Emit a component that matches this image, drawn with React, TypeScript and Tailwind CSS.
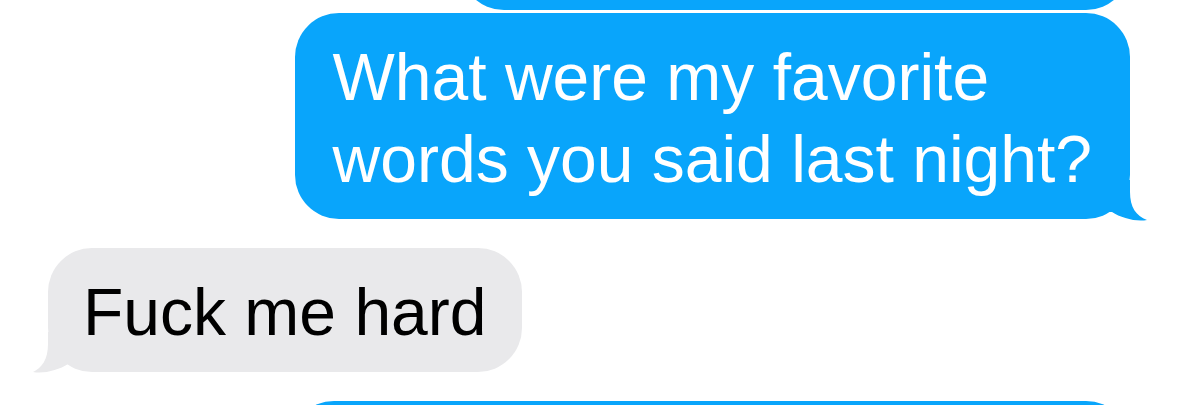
import React from 'react';

const BLUE = '#09a5fb';
const GRAY = '#e9e9eb';

// Outgoing tail hangs off the bottom-right corner of the bubble
const TailRight: React.FC = () => (
  <svg
    width="48"
    height="41"
    viewBox="0 0 48 41"
    className="absolute right-[-18px] bottom-[-2px]"
  >
    <path
      d="M30 0 L30 12 C30 27 36 36 47 40 C36 42 21 38 12 32 L0 32 L0 0 Z"
      fill={BLUE}
    />
  </svg>
);

// Incoming tail, mirrored for the left side
const TailLeft: React.FC = () => (
  <svg
    width="48"
    height="41"
    viewBox="0 0 48 41"
    className="absolute left-[-16px] bottom-[-1px]"
  >
    <path
      d="M16 0 L16 12 C16 27 10 36 1 40 C12 42 27 38 36 32 L48 32 L48 0 Z"
      fill={GRAY}
    />
  </svg>
);

export default function App() {
  return (
    <div className="h-[405px] w-[1179px] overflow-hidden bg-white font-['Liberation_Sans',Arial,sans-serif]">
      <div className="flex flex-col pl-[48px] pr-[49px]">
        {/* previous outgoing message, scrolled mostly out of view */}
        <div className="self-end -mt-[80px] h-[90px] w-[670px] rounded-[44px] bg-[#09a5fb]" />

        <div className="relative self-end mt-[3px] rounded-[44px] bg-[#09a5fb] px-[38px] pt-[23px] pb-[19px] text-[66px] leading-[82px] text-white whitespace-nowrap">
          What were my favorite
          <br />
          words you said last night?
          <TailRight />
        </div>

        <div className="relative self-start mt-[29px] rounded-[44px] bg-[#e9e9eb] pl-[35px] pr-[36px] pt-[23px] pb-[19px] text-[66px] leading-[82px] text-black whitespace-nowrap">
          Fuck me hard
          <TailLeft />
        </div>

        {/* next outgoing message, cut off at the bottom */}
        <div className="self-end mt-[29px] h-[120px] w-[840px] rounded-[44px] bg-[#09a5fb]" />
      </div>
    </div>
  );
}
